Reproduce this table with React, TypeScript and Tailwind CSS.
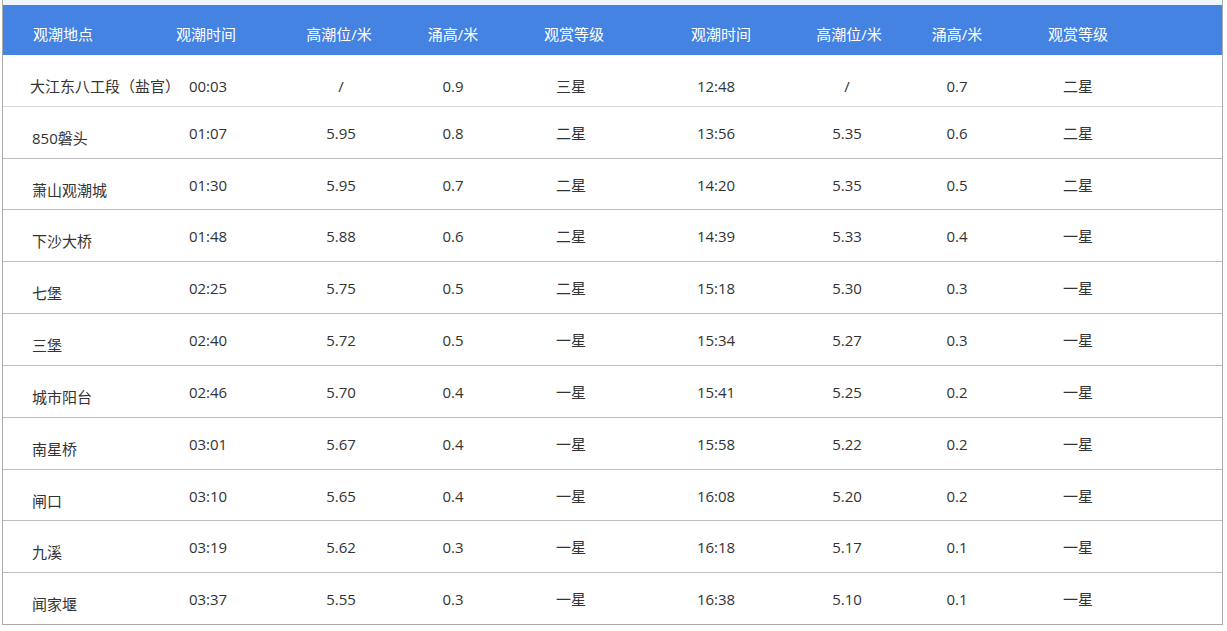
import React from 'react';

type Row = [string, string, string, string, string, string, string, string, string];

const rows: Row[] = [
  ['大江东八工段（盐官）', '00:03', '/', '0.9', '三星', '12:48', '/', '0.7', '二星'],
  ['850磐头', '01:07', '5.95', '0.8', '二星', '13:56', '5.35', '0.6', '二星'],
  ['萧山观潮城', '01:30', '5.95', '0.7', '二星', '14:20', '5.35', '0.5', '二星'],
  ['下沙大桥', '01:48', '5.88', '0.6', '二星', '14:39', '5.33', '0.4', '一星'],
  ['七堡', '02:25', '5.75', '0.5', '二星', '15:18', '5.30', '0.3', '一星'],
  ['三堡', '02:40', '5.72', '0.5', '一星', '15:34', '5.27', '0.3', '一星'],
  ['城市阳台', '02:46', '5.70', '0.4', '一星', '15:41', '5.25', '0.2', '一星'],
  ['南星桥', '03:01', '5.67', '0.4', '一星', '15:58', '5.22', '0.2', '一星'],
  ['闸口', '03:10', '5.65', '0.4', '一星', '16:08', '5.20', '0.2', '一星'],
  ['九溪', '03:19', '5.62', '0.3', '一星', '16:18', '5.17', '0.1', '一星'],
  ['闻家堰', '03:37', '5.55', '0.3', '一星', '16:38', '5.10', '0.1', '一星'],
];

const heads = ['观潮地点', '观潮时间', '高潮位/米', '涌高/米', '观赏等级', '观潮时间', '高潮位/米', '涌高/米', '观赏等级'];
// small nudges so header labels sit where the reference has them
const headPad = ['pl-[30px]', 'pr-[4px] text-center', 'pr-[4px] text-center', 'text-center', 'pl-[6px] text-center', 'pl-[10px] text-center', 'pl-[4px] text-center', 'text-center', 'text-center'];

// row heights incl. bottom divider
const heights = ['h-[52px]', 'h-[52px]', 'h-[51px]', 'h-[52px]', 'h-[52px]', 'h-[52px]', 'h-[52px]', 'h-[52px]', 'h-[51px]', 'h-[52px]', 'h-[51px]'];

const cols = 'grid grid-cols-[139px_132px_134px_90px_146px_144px_118px_102px_140px_1fr]';

export default function App() {
  return (
    <div
      className="w-[1227px] h-[631px] bg-white text-[15px] text-[#333]"
      style={{ fontFamily: '"Open Sans", "Noto Sans CJK SC", sans-serif' }}
    >
      <div className="h-[5px] ml-[2px] w-[1221px] border-l border-r border-[#aaa] bg-[#eef6fb]" />
      <div className="ml-[2px] w-[1221px] border-l border-r border-b border-[#aaa]">
        <div className={`${cols} h-[50px] bg-[#4483e2] text-white leading-5`}>
          {heads.map((h, i) => (
            <div key={i} className={`pt-[19px] whitespace-nowrap ${headPad[i]}`}>
              {h}
            </div>
          ))}
          <div />
        </div>
        {rows.map((r, ri) => (
          <div
            key={ri}
            className={`${cols} ${heights[ri]} border-b leading-5 ${
              ri === 0 ? 'border-[#d8d8d8]' : ri === rows.length - 1 ? 'border-transparent' : 'border-[#bdbdbd]'
            }`}
          >
            {r.map((c, ci) => (
              <div
                key={ci}
                className={`whitespace-nowrap ${
                  ci === 0
                    ? `pt-[21px] ${ri === 0 ? 'pl-[27px]' : 'pl-[29px]'}`
                    : `text-center ${ri === 0 ? 'pt-[21px]' : 'pt-[16px]'}`
                }`}
              >
                {c}
              </div>
            ))}
            <div />
          </div>
        ))}
      </div>
    </div>
  );
}
